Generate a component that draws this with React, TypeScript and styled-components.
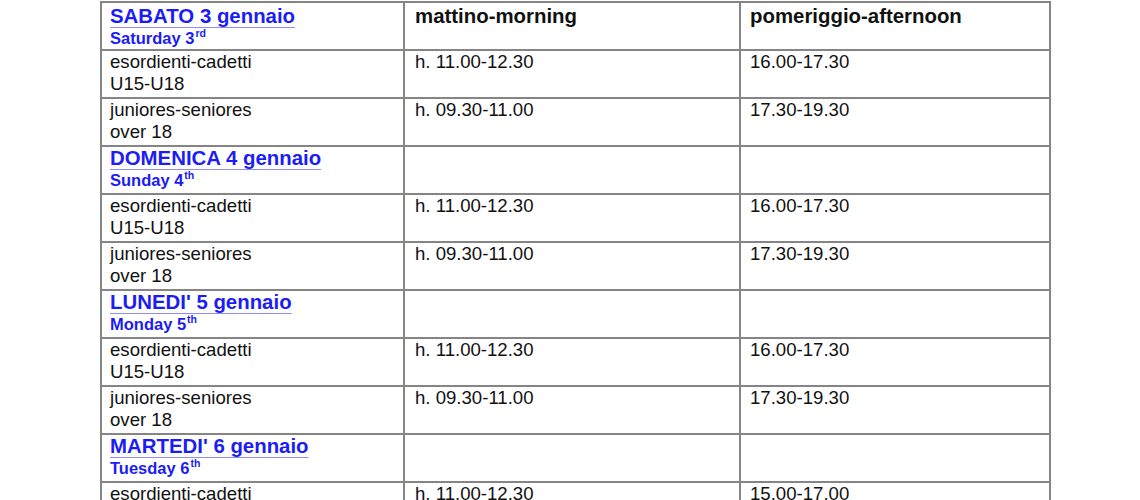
import React from "react";
import styled, { createGlobalStyle } from "styled-components";

// one block per day: the Italian name, the English line and its slots
type Slot = { group: string[]; morning: string; afternoon: string };
type Day = { it: string; en: string; ord: string; slots: Slot[] };

const juniorSlot: Slot = {
  group: ["esordienti-cadetti", "U15-U18"],
  morning: "h. 11.00-12.30",
  afternoon: "16.00-17.30",
};

const seniorSlot: Slot = {
  group: ["juniores-seniores", "over 18"],
  morning: "h. 09.30-11.00",
  afternoon: "17.30-19.30",
};

const days: Day[] = [
  { it: "SABATO 3 gennaio", en: "Saturday 3", ord: "rd", slots: [juniorSlot, seniorSlot] },
  { it: "DOMENICA 4 gennaio", en: "Sunday 4", ord: "th", slots: [juniorSlot, seniorSlot] },
  { it: "LUNEDI' 5 gennaio", en: "Monday 5", ord: "th", slots: [juniorSlot, seniorSlot] },
  {
    it: "MARTEDI' 6 gennaio",
    en: "Tuesday 6",
    ord: "th",
    slots: [
      { group: ["esordienti-cadetti", "U15-U18"], morning: "h. 11.00-12.30", afternoon: "15.00-17.00" },
    ],
  },
];

const GlobalStyle = createGlobalStyle`
  html, body {
    margin: 0;
    padding: 0;
    background: #ffffff;
  }
  body {
    height: 500px;
    overflow: hidden;
    font-family: "Liberation Sans", Arial, Helvetica, sans-serif;
    color: #111111;
  }
`;

const App: React.FC = () => {
  return (
    <>
      <GlobalStyle />
      <Page>
        <Schedule>
          {days.map((day, i) => (
            <React.Fragment key={day.it}>
              <Cell $first={i === 0} $col={0}>
                <DayName>{day.it}</DayName>
                <DayEn>
                  {day.en}
                  <Sup>{day.ord}</Sup>
                </DayEn>
              </Cell>
              <Cell $first={i === 0} $col={1}>
                {i === 0 && <HeadLabel>mattino-morning</HeadLabel>}
              </Cell>
              <Cell $first={i === 0} $col={2}>
                {i === 0 && <HeadLabel>pomeriggio-afternoon</HeadLabel>}
              </Cell>
              {day.slots.map((slot, j) => (
                <React.Fragment key={j}>
                  <Cell $col={0}>
                    {slot.group.map((line) => (
                      <Line key={line}>{line}</Line>
                    ))}
                  </Cell>
                  <Cell $col={1}>
                    <Line>{slot.morning}</Line>
                  </Cell>
                  <Cell $col={2}>
                    <Line>{slot.afternoon}</Line>
                  </Cell>
                </React.Fragment>
              ))}
            </React.Fragment>
          ))}
        </Schedule>
      </Page>
    </>
  );
};

export default App;

const Page = styled.div`
  padding: 1px 0 0 100px;
`;

const Schedule = styled.div`
  display: grid;
  grid-template-columns: 301px 334px 308px;
  grid-auto-rows: 46px;
  gap: 2px;
  padding: 2px;
  width: max-content;
  background: #858585;
`;

const Cell = styled.div<{ $first?: boolean; $col: number }>`
  background: #ffffff;
  padding-top: ${(p) => (p.$first ? "2px" : "0")};
  padding-left: ${(p) => (p.$col === 0 ? "8px" : p.$col === 1 ? "10px" : "9px")};
  padding-right: 8px;
  overflow: hidden;
`;

const Line = styled.div`
  font-size: 18.6px;
  line-height: 22.4px;
  white-space: nowrap;
`;

const HeadLabel = styled.div`
  font-size: 20.4px;
  font-weight: 700;
  line-height: 22px;
  white-space: nowrap;
`;

const DayName = styled.div`
  display: inline-block;
  font-size: 20.4px;
  font-weight: 700;
  line-height: 22px;
  color: #1c1cf5;
  text-decoration: underline;
  text-decoration-color: #8c8cff;
  text-decoration-thickness: 1px;
  text-underline-offset: 4px;
  white-space: nowrap;
`;

const DayEn = styled.div`
  font-size: 16.5px;
  font-weight: 700;
  line-height: 23px;
  color: #1c1cf5;
  white-space: nowrap;
`;

const Sup = styled.sup`
  font-size: 10.5px;
  line-height: 0;
  vertical-align: 7px;
  margin-left: 1px;
`;
